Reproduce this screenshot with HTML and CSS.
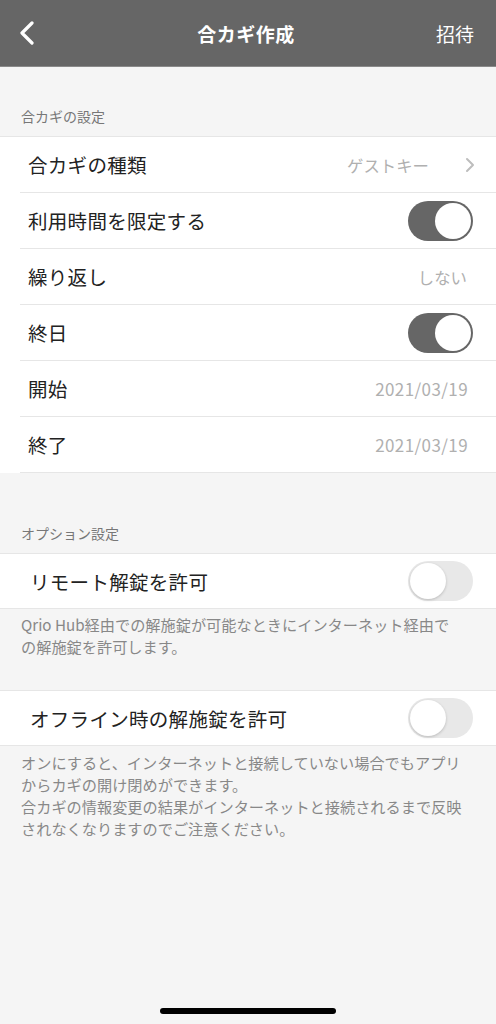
FILE: index.html
```html
<!DOCTYPE html>
<html lang="ja">
<head>
	<meta charset="UTF-8">
	<title>合カギ作成</title>
	<link rel="stylesheet" href="styles.css">
</head>
<body>
	<div class="nav">
		<a class="nav-back" href="#">
			<svg width="18" height="24" viewBox="0 0 18 24"><path d="M14 2 L4 12 L14 22" fill="none" stroke="#fff" stroke-width="3.2" stroke-linecap="round" stroke-linejoin="round"/></svg>
		</a>
		<div class="nav-title">合カギ作成</div>
		<a class="nav-right" href="#">招待</a>
	</div>

	<div class="sec-title">合カギの設定</div>
	<ul class="group">
		<li class="row">
			<span class="label">合カギの種類</span>
			<span class="value">ゲストキー</span>
			<svg class="arrow" width="10" height="16" viewBox="0 0 10 16"><path d="M2 2 L8 8 L2 14" fill="none" stroke="#bdbdbd" stroke-width="2" stroke-linecap="round" stroke-linejoin="round"/></svg>
		</li>
		<li class="row">
			<span class="label">利用時間を限定する</span>
			<span class="switch on"><i></i></span>
		</li>
		<li class="row">
			<span class="label">繰り返し</span>
			<span class="value">しない</span>
		</li>
		<li class="row">
			<span class="label">終日</span>
			<span class="switch on"><i></i></span>
		</li>
		<li class="row">
			<span class="label">開始</span>
			<span class="value date">2021/03/19</span>
		</li>
		<li class="row">
			<span class="label">終了</span>
			<span class="value date">2021/03/19</span>
		</li>
	</ul>

	<div class="sec-title sec-option">オプション設定</div>
	<ul class="group full">
		<li class="row">
			<span class="label">リモート解錠を許可</span>
			<span class="switch"><i></i></span>
		</li>
	</ul>
	<p class="note note-hub">Qrio Hub経由での解施錠が可能なときにインターネット経由での解施錠を許可します。</p>

	<ul class="group full group-offline">
		<li class="row">
			<span class="label">オフライン時の解施錠を許可</span>
			<span class="switch"><i></i></span>
		</li>
	</ul>
	<p class="note note-offline">オンにすると、インターネットと接続していない場合でもアプリからカギの開け閉めができます。<br>合カギの情報変更の結果がインターネットと接続されるまで反映されなくなりますのでご注意ください。</p>

	<div class="home-bar"></div>
</body>
</html>
```

FILE: styles.css
```css
*{
	margin: 0;
	padding: 0;
	list-style-type: none;
	text-decoration: none;
	box-sizing: border-box;
}
html,body{
	height: 100%;
}
body{
	background: #f5f5f5;
	font-family: "Noto Sans CJK JP", "Noto Sans", sans-serif;
	color: #222;
	display: flex;
	flex-direction: column;
}
.nav{
	height: 67px;
	background: #666;
	border-bottom: 1px solid #8a8a8a;
	display: flex;
	align-items: center;
	justify-content: space-between;
	padding: 0 22px 0 18px;
	color: #fff;
}
.nav-back{
	display: flex;
	width: 60px;
}
.nav-title{
	font-size: 19px;
	font-weight: bold;
	letter-spacing: 0.5px;
}
.nav-right{
	color: #fff;
	font-size: 19px;
	width: 60px;
	text-align: right;
}
.sec-title{
	font-size: 14px;
	color: #777;
	padding: 38px 21px 8px;
	line-height: 23px;
}
.sec-option{
	padding-top: 49px;
}
.group{
	background: #fff;
	border-top: 1px solid #e6e6e6;
}
.row{
	height: 56px;
	margin-left: 20px;
	padding: 0 23px 0 8px;
	border-bottom: 1px solid #e6e6e6;
	display: flex;
	align-items: center;
}
.group.full{
	border-bottom: 1px solid #e6e6e6;
}
.group.full .row{
	margin-left: 0;
	padding-left: 30px;
	height: 54px;
	border-bottom: none;
}
.label{
	font-size: 19.5px;
	flex: 1;
	letter-spacing: 0.3px;
}
.value{
	font-size: 16.4px;
	color: #b0b0b0;
	padding-right: 6px;
}
.value.date{
	font-size: 17px;
	letter-spacing: 0.4px;
	padding-right: 5px;
}
.arrow{
	margin-left: 30px;
	margin-right: -2px;
}
.switch{
	width: 65px;
	height: 40px;
	border-radius: 20px;
	background: #e8e8e8;
	padding: 2px;
	display: flex;
}
.switch i{
	width: 36px;
	height: 36px;
	border-radius: 50%;
	background: #fff;
	box-shadow: 0 1px 3px rgba(0,0,0,0.2);
}
.switch.on{
	background: #666;
	justify-content: flex-end;
}
.switch.on i{
	box-shadow: none;
}
.note{
	font-size: 15.2px;
	color: #888;
	line-height: 22px;
	padding: 4px 30px 0 21px;
}
.note-hub{
	padding-right: 38px;
}
.note-offline{
	padding-top: 5px;
}
.group-offline{
	margin-top: 33px;
}
.home-bar{
	margin: auto auto 10px;
	width: 176px;
	height: 6px;
	border-radius: 3px;
	background: #000;
}
```
